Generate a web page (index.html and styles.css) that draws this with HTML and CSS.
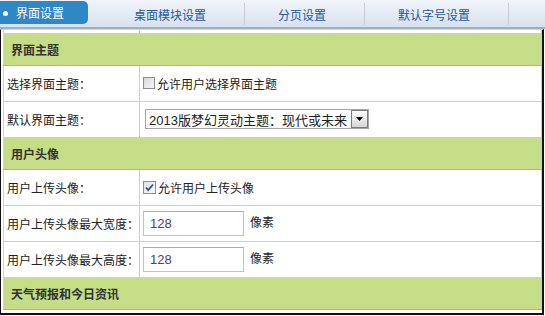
FILE: index.html
```html
<!DOCTYPE html>
<html lang="zh-CN">
<head>
    <meta charset="UTF-8">
    <title>界面设置</title>
    <link rel="stylesheet" href="styles.css">
</head>
<body>

<!-- Tabs -->
<div class="tabs">
    <div class="tab tab-active"><span class="dot"></span>界面设置</div>
    <div class="tab">桌面模块设置</div>
    <div class="tab">分页设置</div>
    <div class="tab">默认字号设置</div>
</div>

<!-- Settings panel -->
<div class="panel">
    <table class="form-table">
        <colgroup>
            <col class="col-label">
            <col>
        </colgroup>
        <tr class="spacer"><td></td><td></td></tr>

        <tr class="section"><th colspan="2">界面主题</th></tr>
        <tr>
            <td class="label">选择界面主题：</td>
            <td class="value">
                <label class="check"><span class="box"></span>允许用户选择界面主题</label>
            </td>
        </tr>
        <tr>
            <td class="label">默认界面主题：</td>
            <td class="value">
                <div class="select">
                    <span class="select-text">2013版梦幻灵动主题：现代或未来</span>
                    <span class="select-btn">
                        <svg width="7" height="4" viewBox="0 0 7 4"><path d="M0 0h7L3.5 4z" fill="#000"/></svg>
                    </span>
                </div>
            </td>
        </tr>

        <tr class="section"><th colspan="2">用户头像</th></tr>
        <tr>
            <td class="label">用户上传头像：</td>
            <td class="value">
                <label class="check"><span class="box box-checked">
                    <svg width="11" height="11" viewBox="0 0 11 11"><path d="M2 5.5l2.2 2.6L9 2.5" fill="none" stroke="#2b4ea8" stroke-width="1.8"/></svg>
                </span>允许用户上传头像</label>
            </td>
        </tr>
        <tr>
            <td class="label">用户上传头像最大宽度：</td>
            <td class="value"><div class="field"><input class="text-input" type="text" value="128"><span class="unit">像素</span></div></td>
        </tr>
        <tr>
            <td class="label">用户上传头像最大高度：</td>
            <td class="value"><div class="field"><input class="text-input" type="text" value="128"><span class="unit">像素</span></div></td>
        </tr>

        <tr class="section"><th colspan="2">天气预报和今日资讯</th></tr>
    </table>
</div>

</body>
</html>
```

FILE: styles.css
```css
/* Global */
* {
    margin: 0;
    padding: 0;
    box-sizing: border-box;
}

body {
    width: 545px;
    font-family: "Liberation Sans", "Noto Sans CJK SC", sans-serif;
    font-size: 12px;
    color: #222;
    background-color: #fff;
}

/* Tabs */
.tabs {
    display: flex;
    height: 29px;
    background: linear-gradient(#f1f5fa, #d7e1ed);
    border-bottom: 2px solid #9eafc3;
}

.tab {
    display: flex;
    align-items: center;
    height: 22px;
    margin-top: 3px;
    padding: 0 38px 0 33px;
    color: #1f5a9e;
    border-right: 1px solid #c3cedb;
    white-space: nowrap;
}

.tab-active {
    width: 88px;
    height: 23px;
    margin-top: 1px;
    margin-right: 13px;
    padding: 0 0 0 16px;
    color: #fff;
    background-color: #2f88c6;
    border-right: none;
    border-radius: 0 5px 5px 0;
    position: relative;
}

.tab-active .dot {
    position: absolute;
    left: 3px;
    top: 10px;
    width: 5px;
    height: 5px;
    border-radius: 50%;
    background-color: #f4f8fc;
}

/* Panel */
.panel {
    width: 544px;
    height: 286px;
    padding-left: 2px;
    border-top: 1px solid #d2d8e0;
    border-left: 1px solid #111;
    border-right: 2px solid #111;
    border-bottom: 2px solid #111;
}

.form-table {
    width: 539px;
    table-layout: fixed;
    border-collapse: collapse;
}

.col-label {
    width: 136px;
}

.form-table td {
    border: 1px solid #cfcfcf;
    height: 36px;
    vertical-align: middle;
}

.form-table .spacer td {
    height: 3px;
    border-top: none;
}

.section th {
    height: 32px;
    padding-left: 7px;
    text-align: left;
    font-weight: bold;
    color: #333;
    background-color: #c5dd87;
    border-left: 1px solid #cfcfcf;
    border-bottom: 1px solid #a8c16f;
}

.label {
    padding-left: 3px;
    white-space: nowrap;
}

.value {
    padding-left: 3px;
}

/* Checkbox */
.check {
    display: flex;
    align-items: center;
}

.box {
    display: inline-flex;
    align-items: center;
    justify-content: center;
    width: 12px;
    height: 12px;
    margin-right: 2px;
    border: 1px solid #8d8d8d;
    background: linear-gradient(135deg, #d9d9d9, #f7f7f7);
}

.box-checked {
    width: 13px;
    height: 13px;
    background: linear-gradient(135deg, #e2e2e2, #fbfbfb);
}

/* Select */
.select {
    display: flex;
    align-items: center;
    width: 224px;
    height: 20px;
    margin-left: 2px;
    border: 1px solid #a4a4a4;
    font-size: 13px;
}

.select-text {
    flex: 1;
    padding-left: 3px;
    color: #222;
    white-space: nowrap;
}

.select-btn {
    display: flex;
    align-items: center;
    justify-content: center;
    width: 17px;
    height: 18px;
    border: 1px solid #7c7c7c;
    background: linear-gradient(#fdfdfd, #d6d6d6);
}

/* Text inputs */
.field {
    display: flex;
    align-items: center;
}

.text-input {
    width: 101px;
    height: 25px;
    padding-left: 6px;
    border: 1px solid #c2c2c2;
    border-top-color: #ababab;
    font-family: "Liberation Sans", sans-serif;
    font-size: 13px;
    color: #4a3d80;
}

.unit {
    margin-left: 6px;
    margin-bottom: 4px;
}
```
